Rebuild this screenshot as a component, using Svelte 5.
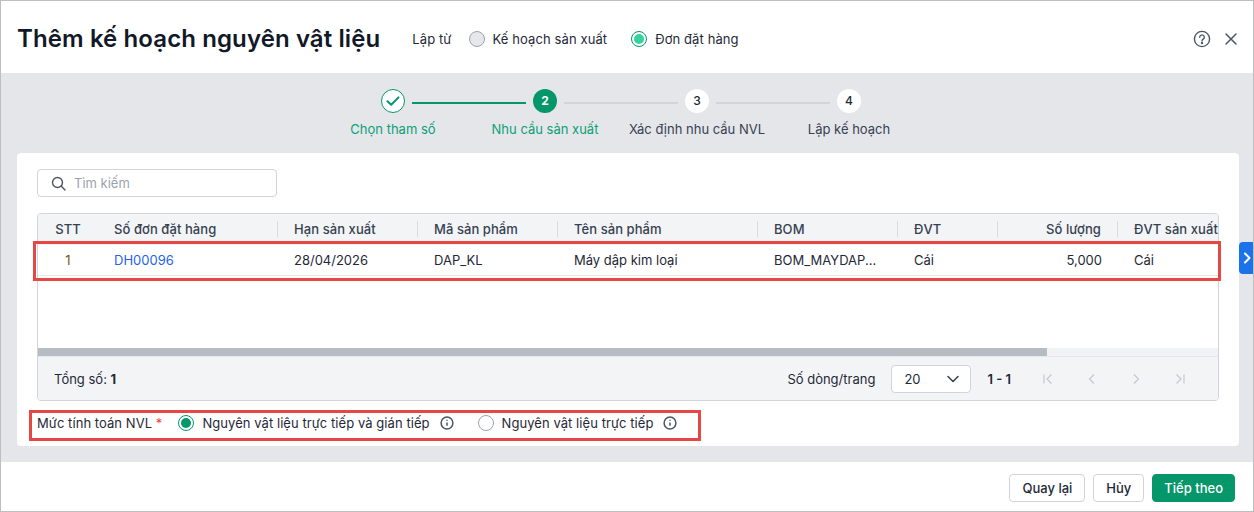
<script>
  const cols = [
    { label: 'STT', value: '1', w: 60, cls: 'center amber' },
    { label: 'Số đơn đặt hàng', value: 'DH00096', w: 180, cls: 'link' },
    { label: 'Hạn sản xuất', value: '28/04/2026', w: 140, cls: '' },
    { label: 'Mã sản phẩm', value: 'DAP_KL', w: 140, cls: '' },
    { label: 'Tên sản phẩm', value: 'Máy dập kim loại', w: 200, cls: '' },
    { label: 'BOM', value: 'BOM_MAYDAP...', w: 140, cls: '' },
    { label: 'ĐVT', value: 'Cái', w: 100, cls: '' },
    { label: 'Số lượng', value: '5,000', w: 120, cls: 'right' },
    { label: 'ĐVT sản xuất', value: 'Cái', w: 120, cls: '' }
  ];
  const steps = [
    { label: 'Chọn tham số', state: 'done', n: '' },
    { label: 'Nhu cầu sản xuất', state: 'active', n: '2' },
    { label: 'Xác định nhu cầu NVL', state: '', n: '3' },
    { label: 'Lập kế hoạch', state: '', n: '4' }
  ];
</script>

<div class="dialog">
  <header class="head">
    <h1>Thêm kế hoạch nguyên vật liệu</h1>
    <span class="from">Lập từ</span>
    <label class="opt gray"><i class="radio off"></i>Kế hoạch sản xuất</label>
    <label class="opt lite"><i class="radio on"></i>Đơn đặt hàng</label>
    <div class="tools">
      <svg width="18" height="18" viewBox="0 0 18 18" fill="none" stroke="#4b5563" stroke-width="1.4"><circle cx="9" cy="9" r="7.6"/><path d="M6.7 7.2a2.3 2.3 0 1 1 3.5 2c-.8.5-1.2.9-1.2 1.7" stroke-linecap="round"/><circle cx="9" cy="13" r=".5" fill="#4b5563"/></svg>
      <svg width="14" height="14" viewBox="0 0 14 14" fill="none" stroke="#4b5563" stroke-width="1.5" stroke-linecap="round"><path d="M2 2l10 10M12 2L2 12"/></svg>
    </div>
  </header>

  <main class="body">
    <div class="stepper">
      {#each steps as s, i}
        <div class="step {s.state}">
          <div class="track">
            {#if i > 0}<span class="line left"></span>{/if}
            <span class="dot">
              {#if s.state === 'done'}
                <svg width="16" height="16" viewBox="0 0 16 16" fill="none" stroke="#059669" stroke-width="2" stroke-linecap="round" stroke-linejoin="round"><path d="M2.5 8.2l3.7 3.6 7.3-7.4"/></svg>
              {:else}{s.n}{/if}
            </span>
            {#if i < 3}<span class="line right"></span>{/if}
          </div>
          <div class="step-label">{s.label}</div>
        </div>
      {/each}
    </div>

    <section class="card">
      <div class="search">
        <svg width="15" height="15" viewBox="0 0 15 15" fill="none" stroke="#4b5563" stroke-width="1.4" stroke-linecap="round"><circle cx="6.5" cy="6.5" r="5"/><path d="M10.3 10.3L14 14"/></svg>
        <span>Tìm kiếm</span>
      </div>

      <div class="table">
        <div class="clip">
          <div class="row thead">
            {#each cols as c, i}
              <div class="cell {c.cls === 'center amber' ? 'center' : c.cls === 'right' ? 'right' : ''} {i > 0 && i < 8 ? 'sep' : ''}" style="width:{c.w}px">{c.label}</div>
            {/each}
          </div>
          <div class="row tbody">
            {#each cols as c}
              <div class="cell {c.cls}" style="width:{c.w}px">{c.value}</div>
            {/each}
          </div>
        </div>
        <div class="empty"></div>
        <div class="scroll"><div class="thumb"></div></div>
        <div class="pager">
          <span>Tổng số: <b>1</b></span>
          <span class="grow"></span>
          <span class="rows">Số dòng/trang</span>
          <div class="select">
            <span>20</span>
            <svg width="12" height="8" viewBox="0 0 12 8" fill="none" stroke="#374151" stroke-width="1.5" stroke-linecap="round" stroke-linejoin="round"><path d="M1 1.5l5 5 5-5"/></svg>
          </div>
          <b class="range">1 - 1</b>
          <div class="nav">
            <svg width="12" height="12" viewBox="0 0 12 12"><path d="M2 1.5v9M9.5 1.5L5 6l4.5 4.5"/></svg>
            <svg width="12" height="12" viewBox="0 0 12 12"><path d="M8 1.5L3.5 6 8 10.5"/></svg>
            <svg width="12" height="12" viewBox="0 0 12 12"><path d="M4 1.5L8.5 6 4 10.5"/></svg>
            <svg width="12" height="12" viewBox="0 0 12 12"><path d="M10 1.5v9M2.5 1.5L7 6l-4.5 4.5"/></svg>
          </div>
        </div>
      </div>

      <div class="level">
        <span class="level-label">Mức tính toán NVL <em>*</em></span>
        <label class="opt first"><i class="radio sel"></i>Nguyên vật liệu trực tiếp và gián tiếp
          <svg class="info" width="14" height="14" viewBox="0 0 14 14" fill="none" stroke="#4b5563" stroke-width="1.5"><circle cx="7" cy="7" r="5.9"/><path d="M7 6.4v3.4M7 3.8v1"/></svg>
        </label>
        <label class="opt second"><i class="radio blank"></i>Nguyên vật liệu trực tiếp
          <svg class="info" width="14" height="14" viewBox="0 0 14 14" fill="none" stroke="#4b5563" stroke-width="1.5"><circle cx="7" cy="7" r="5.9"/><path d="M7 6.4v3.4M7 3.8v1"/></svg>
        </label>
      </div>
    </section>
  </main>

  <footer class="foot">
    <button>Quay lại</button>
    <button class="cancel">Hủy</button>
    <button class="primary">Tiếp theo</button>
  </footer>

  <div class="mark mark-row"></div>
  <div class="mark mark-level"></div>
  <div class="handle">
    <svg width="8" height="12" viewBox="0 0 8 12" fill="none" stroke="#fff" stroke-width="2" stroke-linecap="round" stroke-linejoin="round"><path d="M2 1.5L6.5 6 2 10.5"/></svg>
  </div>
</div>

<style>
  :global(body) { margin: 0; }
  .dialog {
    position: relative;
    width: 1254px;
    height: 512px;
    box-sizing: border-box;
    border: 1px solid #bcbec2;
    display: flex;
    flex-direction: column;
    overflow: hidden;
    background: #fff;
    font: 13px/18px Inter, "Noto Sans", sans-serif;
    color: #1f2937;
  }
  .head {
    height: 72px;
    flex: none;
    display: flex;
    align-items: center;
    padding: 3px 15px 0 16px;
    box-sizing: border-box;
    letter-spacing: .1px;
  }
  h1 {
    margin: 0 32px 0 0;
    font-size: 24px;
    line-height: 30px;
    font-weight: 600;
    color: #111827;
    white-space: nowrap;
    letter-spacing: .1px;
  }
  .from { margin-right: 17px; }
  .opt { display: inline-flex; align-items: center; white-space: nowrap; }
  .gray { margin-right: 24px; }
  .radio {
    width: 16px;
    height: 16px;
    box-sizing: border-box;
    border-radius: 50%;
    border: 1px solid #9ca3af;
    margin-right: 8px;
    flex: none;
    position: relative;
    background: #fff;
  }
  .off { background: #e5e7eb; }
  .on { border-color: #059669; background: #fff; }
  .on::after, .sel::after {
    content: "";
    position: absolute;
    inset: 2px;
    border-radius: 50%;
    background: #34d399;
  }
  .sel { border-color: #059669; }
  .sel::after { background: #059669; }
  .tools { margin-left: auto; display: flex; align-items: center; gap: 13px; }

  .body {
    flex: 1;
    background: #e4e6ea;
    padding: 15px 14px 16px 16px;
    display: flex;
    flex-direction: column;
    min-height: 0;
  }
  .stepper { display: flex; margin-left: 300px; height: 65px; flex: none; }
  .step { width: 152px; text-align: center; }
  .track { position: relative; height: 26px; display: flex; justify-content: center; align-items: center; }
  .dot {
    width: 24px;
    height: 24px;
    box-sizing: border-box;
    border-radius: 50%;
    background: #fff;
    display: flex;
    align-items: center;
    justify-content: center;
    font-size: 12px;
    font-weight: 500;
    position: relative;
  }
  .done .dot { border: 1px solid #059669; }
  .active .dot { background: #059669; color: #fff; font-weight: 700; }
  .line {
    position: absolute;
    top: 14px;
    height: 2px;
    background: #d1d5db;
  }
  .line.left { left: 0; right: calc(50% + 19px); }
  .line.right { left: calc(50% + 19px); right: 0; }
  .done .line.right, .active .line.left { background: #059669; }
  .step-label { margin-top: 6px; color: #374151; white-space: nowrap; }
  .done .step-label, .active .step-label { color: #0d9f78; }

  .card {
    flex: 1;
    background: #fff;
    border-radius: 4px;
    padding: 16px 20px 0;
    min-height: 0;
    display: flex;
    flex-direction: column;
  }
  .search {
    width: 240px;
    height: 28px;
    box-sizing: border-box;
    border: 1px solid #d1d5db;
    border-radius: 4px;
    display: flex;
    align-items: center;
    gap: 8px;
    padding-left: 13px;
    color: #9ca3af;
    flex: none;
  }
  .table {
    margin-top: 16px;
    height: 188px;
    flex: none;
    box-sizing: border-box;
    border: 1px solid #d1d5db;
    border-radius: 4px;
    display: flex;
    flex-direction: column;
    overflow: hidden;
  }
  .clip { overflow: hidden; flex: none; }
  .row { display: flex; width: 1200px; }
  .thead { height: 29px; padding-bottom: 2px; background: #f3f4f6; font-weight: 500; color: #374151; letter-spacing: .07px; }
  .tbody { height: 30px; border-bottom: 1px solid #e5e7eb; width: 1181px; overflow: hidden; }
  .cell {
    flex: none;
    box-sizing: border-box;
    padding: 0 16px;
    display: flex;
    align-items: center;
    position: relative;
    white-space: nowrap;
  }
  .center { justify-content: center; }
  .right { justify-content: flex-end; }
  .thead .right { padding-right: 17px; }
  .sep::after {
    content: "";
    position: absolute;
    right: 0;
    top: 7px;
    height: 16px;
    width: 1px;
    background: #d9dbdf;
  }
  .amber { color: #7c5410; }
  .link { color: #2563eb; }
  .empty { flex: 1; }
  .scroll { height: 8px; background: #f1f2f4; flex: none; }
  .thumb { width: 1009px; height: 100%; background: #b7bbc2; }
  .pager {
    height: 44px;
    flex: none;
    box-sizing: border-box;
    background: #f3f4f6;
    border-top: 1px solid #e5e7eb;
    display: flex;
    align-items: center;
    padding: 0 16px;
  }
  .grow { flex: 1; }
  .rows { margin-right: 16px; }
  .select {
    width: 80px;
    height: 28px;
    box-sizing: border-box;
    background: #fff;
    border: 1px solid #d1d5db;
    border-radius: 4px;
    display: flex;
    align-items: center;
    justify-content: space-between;
    padding: 0 11px 0 12px;
  }
  .range { margin-left: 16px; font-weight: 600; white-space: nowrap; }
  .nav { display: flex; gap: 32px; margin-left: 31px; margin-right: 16px; }
  .nav svg { fill: none; stroke: #c4c8ce; stroke-width: 1.2; }

  .level { display: flex; align-items: center; height: 26px; margin-top: 9px; flex: none; letter-spacing: .06px; }
  .level-label { margin-right: 16px; white-space: nowrap; }
  em { color: #ef4444; font-style: normal; }
  .level .radio { margin-right: 8px; }
  .level .first { margin-right: 24px; }
  .info { margin-left: 10px; }

  .foot {
    height: 49px;
    flex: none;
    box-sizing: border-box;
    display: flex;
    align-items: center;
    justify-content: flex-end;
    gap: 8px;
    padding: 3px 18px 0 0;
  }
  button {
    height: 28px;
    box-sizing: border-box;
    padding: 0 12px;
    background: #fff;
    border: 1px solid #d1d5db;
    border-radius: 4px;
    font: 500 13px/18px Inter, "Noto Sans", sans-serif;
    color: #1f2937;
  }
  .primary { background: #059669; border-color: #059669; color: #fff; padding: 0 11px; }

  .mark {
    position: absolute;
    box-sizing: border-box;
    border: 3px solid #e84545;
    pointer-events: none;
  }
  .mark-row { left: 32px; top: 240px; width: 1188px; height: 40px; }
  .mark-level { left: 28px; top: 409px; width: 672px; height: 31px; }
  .handle {
    position: absolute;
    left: 1238px;
    top: 241px;
    width: 15px;
    height: 32px;
    background: #1a73e8;
    border-radius: 4px 0 0 4px;
    display: flex;
    align-items: center;
    justify-content: center;
  }
</style>
